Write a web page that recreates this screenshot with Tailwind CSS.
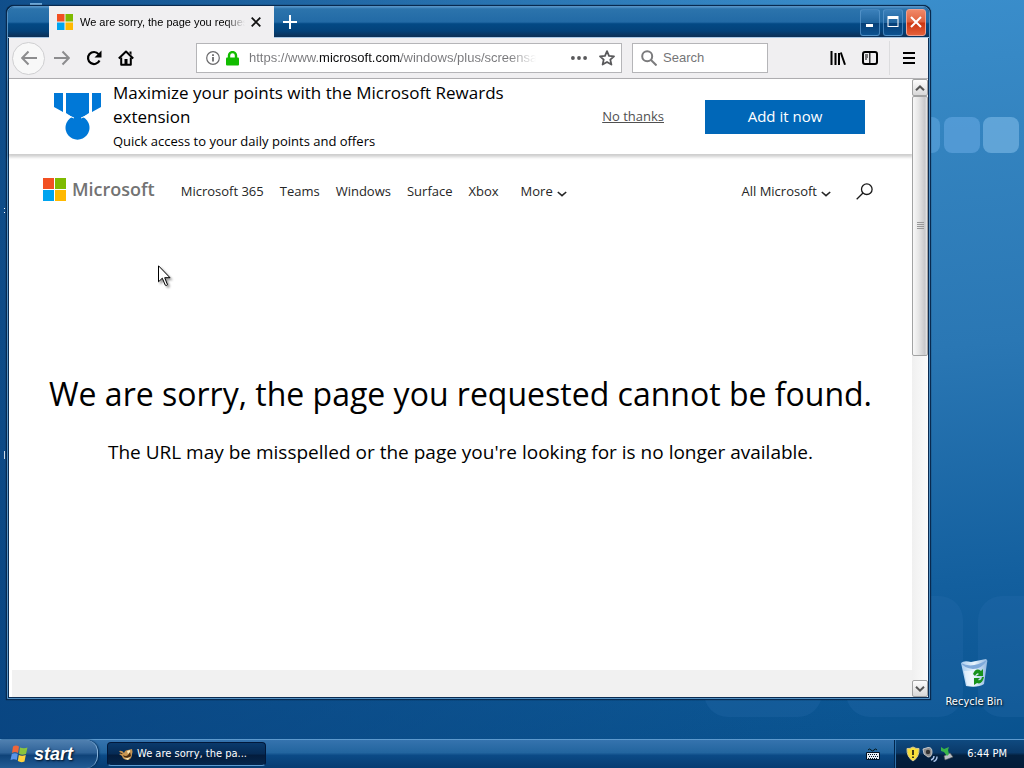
<!DOCTYPE html>
<html lang="en">
<head>
<meta charset="utf-8">
<title>Desktop</title>
<script src="https://cdn.jsdelivr.net/npm/@tailwindcss/browser@4"></script>
</head>
<body class="relative flex h-screen flex-col overflow-hidden bg-[linear-gradient(to_right,rgba(8,66,126,0.85),rgba(8,66,126,0)_85%),linear-gradient(175deg,#3d93d2,#3484c0_25%,#2a77b4_50%,#135f9e_78%,#07508c)] font-['Open_Sans','Noto_Sans',sans-serif] text-black">

  <!-- Desktop -->
  <div class="relative min-h-0 flex-1 overflow-hidden">
    <!-- Wallpaper tiles -->
    <div class="absolute top-[117px] right-[84px] h-[36px] w-[35px] rounded-lg bg-[#5fa5de]/60"></div>
    <div class="absolute top-[117px] right-[44px] h-[36px] w-[36px] rounded-lg bg-[#5ea3dd]/70"></div>
    <div class="absolute top-[117px] right-[5px] h-[36px] w-[36px] rounded-lg bg-[#6cacdd]/80"></div>
    <div class="absolute right-[61px] bottom-[22px] h-[121px] w-[117px] rounded-3xl bg-[#2a6fae]/25"></div>
    <div class="absolute right-0 bottom-[22px] h-[121px] w-[46px] rounded-l-3xl bg-[#2a6fae]/25"></div>
    <div class="absolute right-[202px] bottom-[22px] h-[121px] w-[118px] rounded-3xl bg-[#2a6fae]/25"></div>
    <div class="absolute top-[3px] left-[30px] h-[2px] w-3 bg-[#6ea8d8]"></div>
    <div class="absolute top-[208px] left-[4px] h-[5px] w-px border-y border-white"></div>
    <div class="absolute top-[451px] left-[4px] h-2 w-px bg-white/80"></div>

    <button class="absolute right-[20px] bottom-[30px] flex w-[60px] flex-col items-center gap-1.5">
      <svg class="h-8 w-8" viewBox="0 0 32 32" aria-hidden="true">
        <defs><linearGradient id="bin" x1="0" x2="1"><stop offset="0" stop-color="#a9cdf0"/><stop offset=".5" stop-color="#e8f4fd"/><stop offset="1" stop-color="#8fb6e0"/></linearGradient></defs>
        <path d="M3 6 Q6 3 13 5 L28 2 Q30 3 29 6 L26 27 Q20 31 8 29 Z" fill="url(#bin)"/>
        <path d="M3 6 Q14 12 29 3 Q24 12 15 12 Q6 11 3 6Z" fill="#7ea9da"/>
        <path d="M6 14 L9 28 Q13 30 16 29 L14 14Z" fill="#fff" opacity=".5"/>
        <g fill="#17921c"><path d="M15 17 Q18 10 23 14 L25 12 V19 H18 L21 17 Q19 15 17 19Z"/><path d="M26 20 Q24 28 19 26 L16 28 V21 H22 L20 23 Q23 24 24 20Z"/></g>
      </svg>
      <span class="font-['DejaVu_Sans_Condensed','DejaVu_Sans',sans-serif] text-[11px] leading-[14px] whitespace-nowrap text-white [text-shadow:1px_1px_2px_#000]">Recycle Bin</span>
    </button>

    <!-- Browser window -->
    <section aria-label="Browser window" class="absolute top-[5px] right-[93px] bottom-[39px] left-[6px] flex flex-col rounded-t-lg border border-[#08294f] bg-[#0d4478] shadow-[0_0_1px_#000]">
      <div class="flex min-h-0 flex-1 flex-col rounded-t-[7px] border border-[#5592c4]">

        <div class="flex h-[31px] shrink-0 items-stretch rounded-t-md border-b border-[#a8c8e6] bg-[linear-gradient(#5090c6,#2c74ac_6%,#226aa6_50%,#034985_56%,#03427a_80%,#0c2f55)] pr-[3px] pl-[41px]">
          <div class="-mt-px -mb-px flex w-[225px] shrink items-center bg-[#f0eff1] pr-[13px] pl-2">
            <svg class="h-4 w-4 shrink-0" viewBox="0 0 16 16" aria-hidden="true"><path fill="#f25022" d="M0 0h7.500v7.500H0z"/><path fill="#7fba00" d="M8.500 0H16v7.500H8.500z"/><path fill="#00a4ef" d="M0 8.500h7.500V16H0z"/><path fill="#ffb900" d="M8.500 8.500H16V16H8.500z"/></svg>
            <span class="ml-[7px] min-w-0 flex-1 overflow-hidden font-['Liberation_Sans',Arial,sans-serif] text-[11px] whitespace-nowrap [mask-image:linear-gradient(to_right,#000_88%,transparent)]">We are sorry, the page you requested</span>
            <button aria-label="Close tab" class="ml-1.5"><svg class="h-2.5 w-2.5" viewBox="0 0 10 10" fill="none" stroke="#111" stroke-width="1.800"><path d="M.7.7l8.600 8.600M9.300.7L.7 9.300"/></svg></button>
          </div>
          <button aria-label="New tab" class="ml-[9px]"><svg class="h-3.5 w-3.5" viewBox="0 0 14 14" stroke="#fff" stroke-width="2"><path d="M7 0v14M0 7h14"/></svg></button>
          <div class="ml-auto flex items-center gap-[3px]">
            <button aria-label="Minimize" class="flex h-[27px] w-5 items-center justify-center rounded-[3px] border border-[#5c9ace]/70 bg-[linear-gradient(#3b80ba,#20659f_50%,#063f77_52%,#0c5290)]"><svg class="h-3 w-3" viewBox="0 0 12 12"><path fill="#fff" d="M2 8h7v3H2z"/></svg></button>
            <button aria-label="Maximize" class="flex h-[27px] w-5 items-center justify-center rounded-[3px] border border-[#5c9ace]/70 bg-[linear-gradient(#3b80ba,#20659f_50%,#063f77_52%,#0c5290)]"><svg class="h-3 w-3" viewBox="0 0 12 12"><path fill="#fff" fill-rule="evenodd" d="M.5 0h11v11H.5zM1.500 3v7h9V3z"/></svg></button>
            <button aria-label="Close" class="flex h-[27px] w-5 items-center justify-center rounded-[3px] border border-[#f0a090] bg-[linear-gradient(#f08868,#e0603c_48%,#cc3510_52%,#e4603a)]"><svg class="h-3 w-3" viewBox="0 0 12 12" stroke="#fff" stroke-width="2"><path d="M1 1l10 10M11 1L1 11"/></svg></button>
          </div>
        </div>

        <div class="flex min-h-0 flex-1 flex-col border-x border-b border-[#0a2c52]">
          <!-- Navigation toolbar -->
          <div class="flex h-[41px] shrink-0 items-center border-b border-[#b4b3b6] bg-[#f0eff1] pl-[3px] font-['Liberation_Sans',Arial,sans-serif] text-[13px]">
            <button aria-label="Back" class="flex h-[33px] w-[33px] shrink-0 items-center justify-center rounded-full border border-[#cfcfd1] bg-[#f8f8f8]"><svg class="h-4 w-4" viewBox="0 0 16 16" fill="none" stroke="#8c8c8e" stroke-width="2"><path d="M16 8H1.500M7.500 1.500L1.200 8l6.300 6.500"/></svg></button>
            <button aria-label="Forward" class="ml-[9px]"><svg class="h-4 w-4" viewBox="0 0 16 16" fill="none" stroke="#8c8c8e" stroke-width="2"><path d="M0 8h14.500M8.500 1.500L14.800 8l-6.300 6.500"/></svg></button>
            <button aria-label="Reload" class="ml-4"><svg class="h-4 w-4" viewBox="0 0 16 16" fill="none" stroke="#000" stroke-width="2.200"><path d="M13.500 10.500A6 6 0 1 1 12.600 4.100"/><path fill="#000" stroke="none" d="M15.500.5V7.500H8.500z"/></svg></button>
            <button aria-label="Home" class="ml-4"><svg class="h-4 w-4" viewBox="0 0 16 16" fill="none" stroke="#000" stroke-width="2" stroke-linejoin="round"><path d="M.8 8.500L8 1.500l7.200 7"/><path d="M3.200 7.500V14.800h9.600V7.500"/><path fill="#000" stroke="none" d="M6.500 9h3v6h-3zM11.500 1.500h2V5l-2-2z"/></svg></button>
            <div class="ml-[62px] flex h-[30px] min-w-0 flex-1 items-center border border-[#b5b5b8] bg-white pr-1.5 pl-[9px]">
              <svg class="h-3.5 w-3.5 shrink-0" viewBox="0 0 14 14" fill="none" stroke="#6a6a6c"><circle cx="7" cy="7" r="6.300" stroke-width="1.200"/><path stroke-width="1.800" d="M7 6v4.500M7 3.200v1.800"/></svg>
              <svg class="ml-1.5 h-[15px] w-[13px] shrink-0" viewBox="0 0 13 15"><path fill="none" stroke="#12bc00" stroke-width="2.400" d="M3 8V4.600a3.500 3.500 0 0 1 7 0V8"/><rect y="6.500" width="13" height="8" rx="1" fill="#12bc00"/></svg>
              <input aria-label="Address" value="https://www.microsoft.com/windows/plus/screensavers" class="ml-2.5 min-w-0 flex-1 bg-[linear-gradient(to_right,#77777a_70px,#0c0c0d_70px,#0c0c0d_152px,#77777a_152px,#77777a_260px,transparent_287px)] bg-clip-text text-transparent outline-none">
              <button aria-label="Page actions" class="ml-2"><svg class="h-4 w-4" viewBox="0 0 16 16" fill="#59595b"><circle cx="1.900" cy="8" r="1.900"/><circle cx="8" cy="8" r="1.900"/><circle cx="14.100" cy="8" r="1.900"/></svg></button>
              <button aria-label="Bookmark" class="ml-3"><svg class="h-4 w-4" viewBox="0 0 16 16" fill="none" stroke="#59595b" stroke-width="1.800" stroke-linejoin="round"><path d="M8 1.200l2 4.600 5 .5-3.700 3.300 1.100 5L8 12l-4.400 2.600 1.100-5L1 6.300l5-.5z"/></svg></button>
            </div>
            <label class="ml-2.5 flex h-[30px] w-[136px] shrink-0 items-center border border-[#b5b5b8] bg-white pl-2">
              <svg class="h-4 w-4 shrink-0" viewBox="0 0 16 16" fill="none" stroke="#7b7b7d" stroke-width="2"><circle cx="6.200" cy="6.200" r="5"/><path d="M10 10l5.500 5.500"/></svg>
              <input aria-label="Search" placeholder="Search" class="ml-1.5 min-w-0 flex-1 outline-none placeholder:text-[#757577]">
            </label>
            <button aria-label="Library" class="ml-[62px]"><svg class="h-4 w-4" viewBox="0 0 16 16" stroke="#000" stroke-width="2"><path d="M1.500 1v14M5.500 3v12M9 3v12M10.800 2.500L15 14.800"/></svg></button>
            <button aria-label="Sidebars" class="ml-4"><svg class="h-4 w-4" viewBox="0 0 16 16" fill="none" stroke="#000"><rect x="1" y="2" width="14" height="12" rx="2" stroke-width="2"/><path stroke-width="1.200" d="M7.800 2v12M3 5h3M3 7h3M3 9h2"/></svg></button>
            <span class="ml-[11px] h-[34px] w-px bg-[#dcdcde]"></span>
            <button aria-label="Menu" class="mr-3 ml-3"><svg class="h-3.5 w-3.5" viewBox="0 0 14 14" stroke="#000" stroke-width="2"><path d="M1 2h12M1 7h12M1 12h12"/></svg></button>
          </div>

          <div class="flex min-h-0 flex-1 bg-white">
            <!-- Web page -->
            <div class="flex min-w-0 flex-1 flex-col">
              <aside class="flex h-[75px] shrink-0 items-center bg-white pr-[47px] pl-[45px] shadow-[0_2px_3px_1px_rgba(0,0,0,0.2)]">
                <svg class="h-12 w-12 shrink-0" viewBox="0 0 48 48" fill="#0078d7" aria-hidden="true"><path d="M0 0h9v19L0 14zM12 0h23v20l-6 4a12 12 0 1 1-11 0l-6-4zM38 0h9v14l-9 5z"/><path d="M13 22l7 3M34 22l-7 3" stroke="#fff"/></svg>
                <div class="ml-[11px] min-w-0 flex-1">
                  <p class="max-w-[420px] text-[17px] leading-6">Maximize your points with the Microsoft Rewards extension</p>
                  <p class="text-[13px] leading-6">Quick access to your daily points and offers</p>
                </div>
                <a href="#" class="text-[13px] text-[#505050] underline">No thanks</a>
                <button class="ml-[41px] h-[34px] w-40 shrink-0 bg-[#0067b8] text-[15px] text-white">Add it now</button>
              </aside>

              <header class="flex h-[74px] shrink-0 items-center px-[34px] text-[13px] text-[#262626]">
                <a href="#" class="mb-1 flex items-center gap-1.5">
                  <svg class="h-[23px] w-[23px]" viewBox="0 0 23 23" aria-hidden="true"><path fill="#f25022" d="M0 0h11v11H0z"/><path fill="#7fba00" d="M12 0h11v11H12z"/><path fill="#00a4ef" d="M0 12h11v11H0z"/><path fill="#ffb900" d="M12 12h11v11H12z"/></svg>
                  <span class="text-lg leading-6 font-semibold text-[#737373]">Microsoft</span>
                </a>
                <nav class="ml-[26px] flex items-center gap-4 pt-0.5 whitespace-nowrap">
                  <a href="#">Microsoft 365</a>
                  <a href="#">Teams</a>
                  <a href="#">Windows</a>
                  <a href="#">Surface</a>
                  <a href="#">Xbox</a>
                  <button class="ml-1.5 flex items-center gap-1">More <svg class="mt-1 h-1.5 w-2.5" viewBox="0 0 10 6" fill="none" stroke="#262626" stroke-width="1.600"><path d="M.8 1L5 4.600 9.200 1"/></svg></button>
                </nav>
                <button class="ml-auto flex items-center gap-1 pt-0.5 whitespace-nowrap">All Microsoft <svg class="mt-1 h-1.5 w-2.5" viewBox="0 0 10 6" fill="none" stroke="#262626" stroke-width="1.600"><path d="M.8 1L5 4.600 9.200 1"/></svg></button>
                <button aria-label="Search Microsoft" class="mr-[5px] ml-[25px]"><svg class="h-[17px] w-[17px]" viewBox="0 0 17 17" fill="none" stroke="#1a1a1a" stroke-width="1.300"><circle cx="10.800" cy="6.200" r="5.300"/><path d="M7 10L.7 16.300"/></svg></button>
              </header>

              <main class="flex-1 pt-[142px] text-center">
                <h1 class="text-[32px] leading-12 whitespace-nowrap">We are sorry, the page you requested cannot be found.</h1>
                <p class="mt-5 text-[19px] leading-7">The URL may be misspelled or the page you're looking for is no longer available.</p>
              </main>
              <footer class="ml-[3px] h-[27px] shrink-0 bg-[#f1f1f1]"></footer>
            </div>

            <!-- Scrollbar -->
            <div class="flex w-4 shrink-0 flex-col bg-[linear-gradient(to_right,#f0f0f0,#fbfbfb)]" aria-hidden="true">
              <div class="flex h-[17px] items-center justify-center rounded-[2px] border border-[#a2a3a3] bg-[linear-gradient(#fdfdfd,#d8d8d8)]"><svg class="h-1.5 w-2.5" viewBox="0 0 10 6" fill="none" stroke="#555" stroke-width="2"><path d="M1 5.200L5 1.400l4 3.800"/></svg></div>
              <div class="flex h-[260px] items-center justify-center rounded-[2px] border border-[#a2a3a3] bg-[linear-gradient(to_right,#f8f8f8,#e6e6e6_40%,#c8c8ca_85%,#e8e8e8)]"><svg class="h-2 w-[7px]" viewBox="0 0 7 8" stroke="#999"><path d="M0 .5h7M0 2.500h7M0 4.500h7M0 6.500h7"/></svg></div>
              <div class="mt-auto flex h-[17px] items-center justify-center rounded-[2px] border border-[#a2a3a3] bg-[linear-gradient(#fdfdfd,#d8d8d8)]"><svg class="h-1.5 w-2.5" viewBox="0 0 10 6" fill="none" stroke="#555" stroke-width="2"><path d="M1 .8l4 3.800L9 .8"/></svg></div>
            </div>
          </div>
        </div>
      </div>
    </section>
  </div>

  <!-- Taskbar -->
  <footer class="flex h-[29px] shrink-0 items-stretch border-t border-[#5d9ace] bg-[linear-gradient(#3573ae,#22659f_45%,#0b4a86_55%,#063c72)] font-['DejaVu_Sans_Condensed','DejaVu_Sans',sans-serif] text-[11px] text-white">
    <button class="flex w-[98px] items-center gap-1.5 rounded-r-xl border-r border-[#8ab4da] bg-[linear-gradient(#5080b0,#2e6298_45%,#0f4379_55%,#235c94)] pl-2.5 shadow-[1px_0_2px_#022a55]">
      <svg class="h-[18px] w-[18px]" viewBox="0 0 18 18" aria-hidden="true"><path fill="#f0663a" d="M3 1.500Q6-.5 9 1.500L8 8Q5 6 2 8Z"/><path fill="#8ac43e" d="M10 2.500Q14 4 17.500 2.500L16 9Q12 10.500 9 8.800Z"/><path fill="#5a94e8" d="M1.800 9Q5 7.500 7.800 9L6.800 15Q4 13.500.5 15Z"/><path fill="#ffd23c" d="M8.800 10Q12 11.500 15.800 10L14.500 16.500Q11 18 7.800 16Z"/></svg>
      <span class="font-['Liberation_Sans',Arial,sans-serif] text-[18px] leading-5 font-bold italic [text-shadow:1px_1px_2px_#012]">start</span>
    </button>
    <button class="my-[2px] ml-[9px] flex w-[159px] items-center gap-[3px] rounded-sm border border-[#01183a] border-b-[#5d9ace] bg-[linear-gradient(#0a3a6c,#062a54_50%,#031c3c_55%,#05264c)] pl-2.5">
      <svg class="h-4 w-4 shrink-0" viewBox="0 0 16 16" aria-hidden="true"><path fill="#c99653" d="M1 5q3-1 5 2 1-3 4-3l4-1q1 3 0 5 0 5-4 6-5 0-6-4L1 8l2-.5z"/><path fill="#4a2c12" d="M5 9q3 2 5 0l2-3 1 4q-3 3-7 1zM2 6l3 2-2 0z"/><path fill="#fbe9b8" d="M9 5l3-1v2l-2 2zM6 12q3 1 6-1l-2 3z"/></svg>
      <span class="whitespace-nowrap">We are sorry, the pa...</span>
    </button>
    <button aria-label="Keyboard" class="mr-[14px] ml-auto"><svg class="h-3 w-3.5" viewBox="0 0 14 12"><path d="M2 2q1.500-2 3 0t3 0 3 0" fill="none" stroke="#011"/><path fill="#e8eef4" stroke="#012" d="M.5 4.500h13v7H.5z"/><path stroke="#012" stroke-dasharray="1 1" d="M2 6.500h10M3 8.500h9M2 10.500h10"/></svg></button>
    <div class="flex items-center border-l border-[#02264c] bg-[linear-gradient(#0f4a80,#0a3a6a_45%,#03203f_55%,#031c38)] pr-[17px] pl-[11px] shadow-[inset_1px_0_0_#2d71ab]">
      <div class="flex items-center gap-0.5">
        <svg class="h-4 w-3.5" viewBox="0 0 14 16" aria-label="Security alert"><path fill="#f8e03a" stroke="#d8c890" d="M7 1q3 2 6 1.500Q13.500 11 7 15 .5 11 1 2.500 4 3 7 1z"/><path stroke="#111" stroke-width="1.600" d="M7 4v5M7 10.500v1.500"/></svg>
        <svg class="h-4 w-4" viewBox="0 0 16 16" aria-label="Volume"><path fill="#8f8f8f" stroke="#ddd" stroke-width=".8" d="M1 3l5-1.500Q10 1 10 6T6 11L2 8z"/><circle cx="6" cy="6" r="2.200" fill="#333"/><path fill="none" stroke="#a9c4ea" stroke-width="1.400" d="M9 14q3-1 3-4M11.500 15.500q3.500-1 3.500-5"/></svg>
        <svg class="h-4 w-4" viewBox="0 0 16 16" aria-label="Remove hardware"><path fill="#b9c0c6" stroke="#555" stroke-width=".6" d="M4 10l6-3 3 4-8 3z"/><path fill="#39b54a" d="M1 1l3 2 5-2-1 3 1 4-2 2-3-4-3-1z"/></svg>
      </div>
      <time class="ml-[11px] whitespace-nowrap">6:44 PM</time>
    </div>
  </footer>

  <!-- Mouse pointer -->
  <svg class="pointer-events-none absolute top-[265px] left-[158px] h-[22px] w-[15px] drop-shadow-[2px_2px_1px_rgba(0,0,0,0.4)]" viewBox="0 0 15 22" aria-hidden="true"><path fill="#fff" stroke="#000" d="M.5.8v16l3.800-3.600 3 7q1 .8 2.200-.5l-2.800-7H12z"/></svg>
</body>
</html>
